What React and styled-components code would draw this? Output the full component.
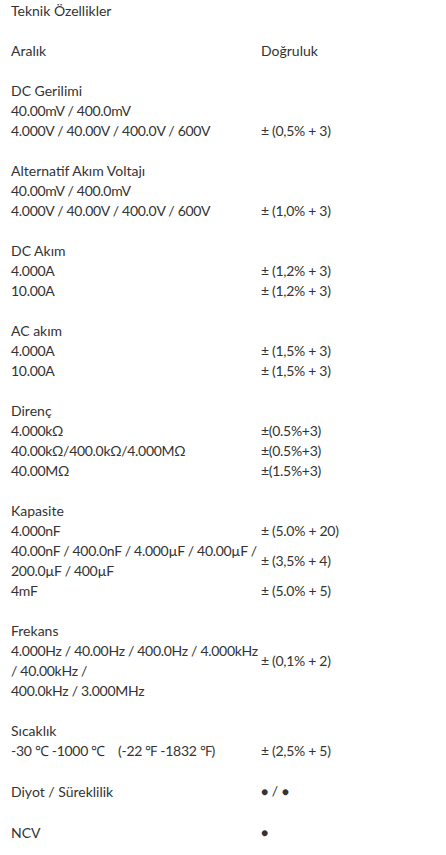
import React from "react";
import styled, { createGlobalStyle } from "styled-components";

const Global = createGlobalStyle`
  html, body {
    margin: 0;
    padding: 0;
    background: #fff;
  }
  body {
    font-family: Lato, "Open Sans", sans-serif;
    font-size: 14px;
    line-height: 20px;
    color: #333;
  }
`;

const Wrap = styled.div`
  padding: 1px 11px 0;
`;

const Heading = styled.p`
  margin: 0 0 20px;
`;

const Specs = styled.table`
  border-collapse: collapse;
  border-spacing: 0;
  width: 100%;
`;

const Cell = styled.td`
  padding: 0;
  height: 20px;
  vertical-align: middle;
  letter-spacing: ${(p) => (p.$num ? "-0.3px" : "normal")};
  &:first-child {
    width: 250px;
  }
`;

const Dots = styled.span`
  font-size: 12px;
`;

const sections = [
  {
    title: "DC Gerilimi",
    rows: [
      ["40.00mV / 400.0mV", ""],
      ["4.000V / 40.00V / 400.0V / 600V", "± (0,5% + 3)"],
    ],
  },
  {
    title: "Alternatif Akım Voltajı",
    rows: [
      ["40.00mV / 400.0mV", ""],
      ["4.000V / 40.00V / 400.0V / 600V", "± (1,0% + 3)"],
    ],
  },
  {
    title: "DC Akım",
    rows: [
      ["4.000A", "± (1,2% + 3)"],
      ["10.00A", "± (1,2% + 3)"],
    ],
  },
  {
    title: "AC akım",
    rows: [
      ["4.000A", "± (1,5% + 3)"],
      ["10.00A", "± (1,5% + 3)"],
    ],
  },
  {
    title: "Direnç",
    rows: [
      ["4.000kΩ", "±(0.5%+3)"],
      ["40.00kΩ/400.0kΩ/4.000MΩ", "±(0.5%+3)"],
      ["40.00MΩ", "±(1.5%+3)"],
    ],
  },
  {
    title: "Kapasite",
    rows: [
      ["4.000nF", "± (5.0% + 20)"],
      ["40.00nF / 400.0nF / 4.000µF / 40.00µF / 200.0µF / 400µF", "± (3,5% + 4)"],
      ["4mF", "± (5.0% + 5)"],
    ],
  },
  {
    title: "Frekans",
    rows: [
      ["4.000Hz / 40.00Hz / 400.0Hz / 4.000kHz / 40.00kHz /", "± (0,1% + 2)"],
      ["400.0kHz / 3.000MHz", ""],
    ],
  },
  {
    title: "Sıcaklık",
    rows: [["-30 ℃ -1000 ℃\u00a0\u00a0\u00a0 (-22 ℉ -1832 ℉)", "± (2,5% + 5)"]],
  },
];

const Spacer = () => (
  <tr>
    <Cell colSpan={2} />
  </tr>
);

export default function App() {
  return (
    <>
      <Global />
      <Wrap>
        <Heading>Teknik Özellikler</Heading>
        <Specs>
          <tbody>
            <tr>
              <Cell>Aralık</Cell>
              <Cell>Doğruluk</Cell>
            </tr>
            <Spacer />
            {sections.map((s) => (
              <React.Fragment key={s.title}>
                <tr>
                  <Cell colSpan={2}>{s.title}</Cell>
                </tr>
                {s.rows.map((r, i) => (
                  <tr key={i}>
                    <Cell $num>{r[0]}</Cell>
                    <Cell $num>{r[1]}</Cell>
                  </tr>
                ))}
                <Spacer />
              </React.Fragment>
            ))}
            <tr>
              <Cell>Diyot / Süreklilik</Cell>
              <Cell>
                <Dots>●</Dots> / <Dots>●</Dots>
              </Cell>
            </tr>
            <Spacer />
            <tr>
              <Cell>NCV</Cell>
              <Cell>
                <Dots>●</Dots>
              </Cell>
            </tr>
          </tbody>
        </Specs>
      </Wrap>
    </>
  );
}
